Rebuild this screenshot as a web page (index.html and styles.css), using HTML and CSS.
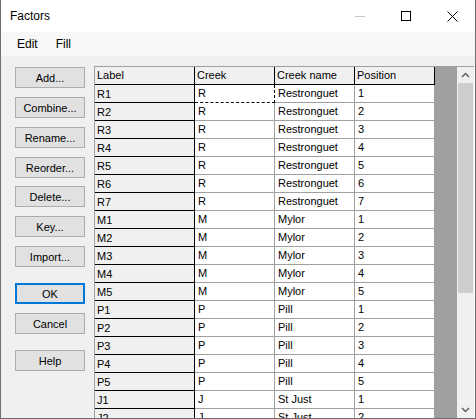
FILE: index.html
```html
<!DOCTYPE html>
<html>
<head>
<meta charset="utf-8">
<title>Factors</title>
<link rel="stylesheet" href="styles.css">
</head>
<body>
<div class="window">
  <div class="titlebar">
    <span class="title">Factors</span>
    <div class="caption">
      <span class="cap-btn"><svg width="10" height="10" viewBox="0 0 10 10"><line x1="0" y1="5.5" x2="10" y2="5.5" stroke="#c6c6c6" stroke-width="1"/></svg></span>
      <span class="cap-btn"><svg width="10" height="10" viewBox="0 0 10 10"><rect x="0.5" y="0.5" width="9" height="9" fill="none" stroke="#000" stroke-width="1"/></svg></span>
      <span class="cap-btn"><svg width="11" height="11" viewBox="0 0 11 11"><path d="M0.5 0.5L10.5 10.5M10.5 0.5L0.5 10.5" stroke="#000" stroke-width="1" fill="none"/></svg></span>
    </div>
  </div>
  <div class="menubar">
    <span class="menu-item">Edit</span>
    <span class="menu-item">Fill</span>
  </div>
  <div class="content">
    <div class="buttons">
      <div class="btn">Add...</div>
      <div class="btn">Combine...</div>
      <div class="btn">Rename...</div>
      <div class="btn">Reorder...</div>
      <div class="btn btn-delete">Delete...</div>
      <div class="btn">Key...</div>
      <div class="btn">Import...</div>
      <div class="btn btn-ok">OK</div>
      <div class="btn">Cancel</div>
      <div class="btn btn-help">Help</div>
    </div>
    <div class="grid">
      <div class="sheet">
        <div class="hc">Label</div><div class="hc">Creek</div><div class="hc">Creek name</div><div class="hc">Position</div>
        <div class="lc">R1</div><div class="dc focus">R</div><div class="dc">Restronguet</div><div class="dc">1</div>
        <div class="lc">R2</div><div class="dc">R</div><div class="dc">Restronguet</div><div class="dc">2</div>
        <div class="lc">R3</div><div class="dc">R</div><div class="dc">Restronguet</div><div class="dc">3</div>
        <div class="lc">R4</div><div class="dc">R</div><div class="dc">Restronguet</div><div class="dc">4</div>
        <div class="lc">R5</div><div class="dc">R</div><div class="dc">Restronguet</div><div class="dc">5</div>
        <div class="lc">R6</div><div class="dc">R</div><div class="dc">Restronguet</div><div class="dc">6</div>
        <div class="lc">R7</div><div class="dc">R</div><div class="dc">Restronguet</div><div class="dc">7</div>
        <div class="lc">M1</div><div class="dc">M</div><div class="dc">Mylor</div><div class="dc">1</div>
        <div class="lc">M2</div><div class="dc">M</div><div class="dc">Mylor</div><div class="dc">2</div>
        <div class="lc">M3</div><div class="dc">M</div><div class="dc">Mylor</div><div class="dc">3</div>
        <div class="lc">M4</div><div class="dc">M</div><div class="dc">Mylor</div><div class="dc">4</div>
        <div class="lc">M5</div><div class="dc">M</div><div class="dc">Mylor</div><div class="dc">5</div>
        <div class="lc">P1</div><div class="dc">P</div><div class="dc">Pill</div><div class="dc">1</div>
        <div class="lc">P2</div><div class="dc">P</div><div class="dc">Pill</div><div class="dc">2</div>
        <div class="lc">P3</div><div class="dc">P</div><div class="dc">Pill</div><div class="dc">3</div>
        <div class="lc">P4</div><div class="dc">P</div><div class="dc">Pill</div><div class="dc">4</div>
        <div class="lc">P5</div><div class="dc">P</div><div class="dc">Pill</div><div class="dc">5</div>
        <div class="lc">J1</div><div class="dc">J</div><div class="dc">St Just</div><div class="dc">1</div>
        <div class="lc">J2</div><div class="dc">J</div><div class="dc">St Just</div><div class="dc">2</div>
        <div class="lc">J3</div><div class="dc">J</div><div class="dc">St Just</div><div class="dc">3</div>
      </div>
      <div class="workspace"></div>
      <div class="scrollbar">
        <div class="sb-arrow"><svg width="9" height="6" viewBox="0 0 9 6"><path d="M1 5L4.5 1.5L8 5" stroke="#606060" stroke-width="1.5" fill="none"/></svg></div>
        <div class="sb-track">
          <div class="sb-thumb"></div>
        </div>
        <div class="sb-arrow"><svg width="9" height="6" viewBox="0 0 9 6"><path d="M1 1L4.5 4.5L8 1" stroke="#606060" stroke-width="1.5" fill="none"/></svg></div>
      </div>
    </div>
  </div>
</div>
</body>
</html>
```
FILE: styles.css
```css
* { box-sizing: border-box; }
html, body { margin: 0; padding: 0; }
body {
  width: 476px;
  height: 419px;
  overflow: hidden;
  font-family: "Liberation Sans", Arial, sans-serif;
  color: #000;
  background: #f0f0f0;
}
.window {
  width: 476px;
  height: 419px;
  display: flex;
  flex-direction: column;
  border-left: 1px solid #6f6f6f;
  border-right: 1px solid #6f6f6f;
  border-bottom: 1px solid #6f6f6f;
  background: #f0f0f0;
  overflow: hidden;
}
.titlebar {
  height: 32px;
  flex: none;
  display: flex;
  align-items: center;
  background: #ffffff;
}
.title {
  font-size: 12px;
  padding-left: 9px;
  flex: 1;
  line-height: 14px;
  padding-bottom: 1px;
}
.caption {
  display: flex;
  height: 32px;
}
.cap-btn {
  width: 46px;
  height: 32px;
  display: flex;
  align-items: center;
  justify-content: center;
}
.cap-btn svg { display: block; }
.menubar {
  height: 24px;
  flex: none;
  display: flex;
  align-items: center;
  padding-left: 7px;
  background: #f7f7f7;
  font-size: 12px;
}
.menu-item {
  padding: 0 9px;
  line-height: 16px;
  padding-bottom: 1px;
}
.content {
  flex: 1;
  min-height: 0;
  display: flex;
  padding: 10px 0 0 14px;
  gap: 9px;
}
.buttons {
  width: 70px;
  flex: none;
  display: flex;
  flex-direction: column;
  padding-top: 1px;
}
.btn {
  height: 21px;
  border: 1px solid #adadad;
  background: #e1e1e1;
  font-size: 11px;
  display: flex;
  align-items: center;
  justify-content: center;
  margin-top: 9px;
}
.btn:first-child { margin-top: 0; }
.btn-delete { margin-top: 8px; }
.btn-ok {
  margin-top: 16px;
  border: 2px solid #0078d7;
}
.btn-help { margin-top: 16px; }
.grid {
  flex: 1;
  min-width: 0;
  display: flex;
  border-top: 1px solid #a0a0a0;
  border-left: 1px solid #a0a0a0;
  border-right: 1px solid #ffffff;
  overflow: hidden;
}
.sheet {
  display: grid;
  grid-template-columns: 100px 80px 80px 80px;
  grid-auto-rows: 18px;
  align-content: start;
  flex: none;
  width: 340px;
  background: #a0a0a0;
  font-size: 11px;
  line-height: 12px;
}
.hc, .lc, .dc {
  border-right: 1px solid #a0a0a0;
  border-bottom: 1px solid #a0a0a0;
  padding: 2px 0 0 2px;
  white-space: nowrap;
  overflow: hidden;
}
.hc {
  background: #f0f0f0;
  border-color: #000;
}
.lc {
  background: #f0f0f0;
  border-color: #000;
  padding-top: 3px;
}
.dc {
  background: #ffffff;
  padding-left: 3px;
}
.dc.focus {
  border-right: 1px dashed #000;
  border-bottom: 1px dashed #000;
}
.workspace {
  width: 22px;
  flex: none;
  background: #a0a0a0;
}
.scrollbar {
  width: 17px;
  flex: none;
  display: flex;
  flex-direction: column;
  background: #f0f0f0;
}
.sb-arrow {
  height: 16px;
  flex: none;
  display: flex;
  align-items: center;
  justify-content: center;
}
.sb-arrow svg { display: block; }
.sb-track {
  flex: 1;
  padding: 0 1px;
}
.sb-thumb {
  height: 210px;
  background: #cdcdcd;
}
```
